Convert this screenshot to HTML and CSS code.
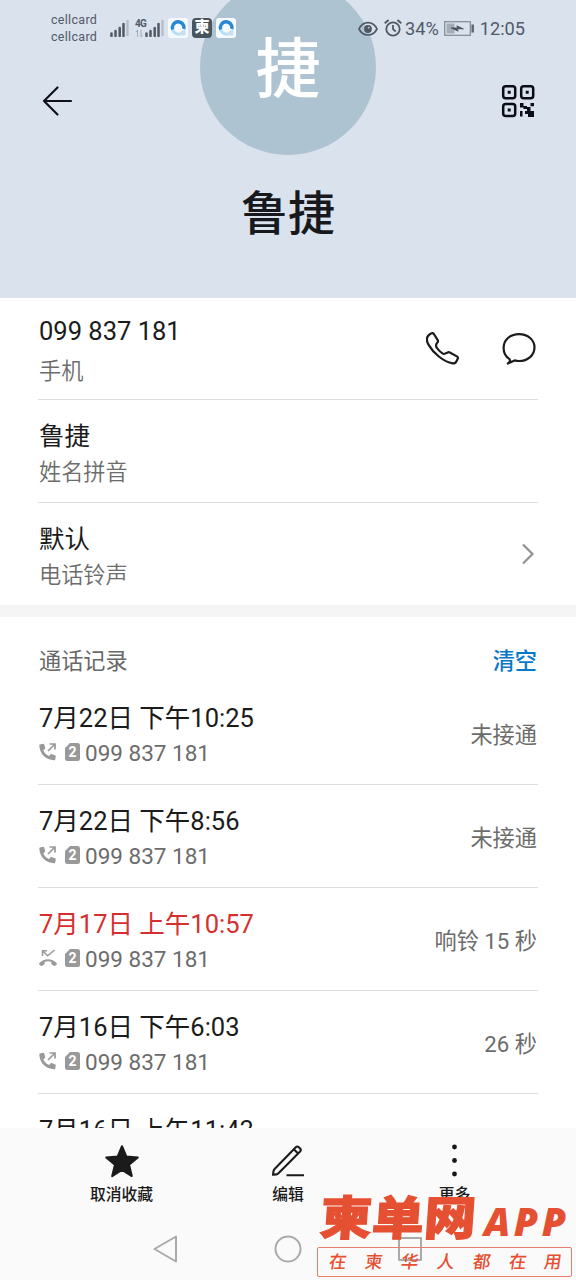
FILE: index.html
```html
<!DOCTYPE html>
<html lang="zh-CN">
<head>
<meta charset="utf-8">
<title>鲁捷</title>
<link rel="stylesheet" href="styles.css">
</head>
<body>
<svg width="0" height="0" class="defs">
  <symbol id="sim" viewBox="0 0 15 18"><path d="M5 0h7.500a2.500 2.500 0 0 1 2.500 2.500v13a2.500 2.500 0 0 1-2.500 2.500h-10a2.500 2.500 0 0 1-2.500-2.500V5z" fill="#999"/></symbol>
  <symbol id="handset" viewBox="0 0 18 18"><path d="M1 1.500 4.200.8c.6 0 .9.300 1.100.9l.9 3.200c.1.500 0 .8-.4 1.100L4.300 7.200c1.200 2.700 3 4.600 5.800 5.900l1.400-1.700c.3-.4.700-.5 1.200-.3l3.500 1.300c.5.200.7.500.6 1l-.6 3c-.1.600-.4.800-1 .8C6.800 17 .8 11.300.3 2.500c0-.6.200-.9.700-1z" fill="#999"/><path d="M9 8l7-7M10.500 1H16v5.500" fill="none" stroke="#999" stroke-width="1.700"/></symbol>
  <symbol id="missed" viewBox="0 0 18 18"><path d="M.2 14.300c4.900-5.300 12.700-5.300 17.600 0 .3.400.3.700 0 1l-1.600 1.500c-.3.300-.7.300-1 .1l-2.500-1.600c-.3-.2-.4-.5-.4-.9v-1.700c-2.200-.7-4.400-.7-6.600 0v1.700c0 .4-.1.700-.4.900l-2.500 1.600c-.3.200-.7.200-1-.1L.2 15.300c-.3-.3-.3-.6 0-1z" fill="#999"/><path d="M3.500 7V1.800H8M4 2.300l4.700 4.400L15.500 1" fill="none" stroke="#999" stroke-width="1.500"/></symbol>
  <symbol id="bars" viewBox="0 0 19 18"><path d="M1.500 17v-2.500M5.500 17v-5M9.700 17V9M13.500 17V5" stroke="#515a67" stroke-width="2.500" stroke-linecap="round"/></symbol>
  <symbol id="browser" viewBox="0 0 20 20"><rect width="20" height="20" rx="3" fill="#f5faff"/><path d="M4.500 9.500a6 6 0 0 0 7 6.500" fill="none" stroke="#b5ddf7" stroke-width="3"/><path d="M4.700 11.500A5.800 5.800 0 1 1 15.800 11" fill="none" stroke="#2787d4" stroke-width="3.400"/><path d="M11 17.500c.2-3.500 2.500-5.500 6.500-5.500v5.500z" fill="#c9dfef"/></symbol>
</svg>
<main class="screen">
  <header class="hero">
    <div class="avatar">捷</div>
    <div class="status">
      <div class="carriers"><span>cellcard</span><span>cellcard</span></div>
      <div class="signals">
        <svg class="bars" viewBox="0 0 19 18"><use href="#bars"/><path d="M17.500 17V1" stroke="#b4bcc8" stroke-width="2.300"/></svg>
        <div class="net"><b>4G</b><svg width="9" height="9" viewBox="0 0 9 9"><path d="M2.500 8V1L1 3M6 1v7l1.500-2" fill="none" stroke="#a4adb9"/></svg></div>
        <svg class="bars second" viewBox="0 0 19 18"><use href="#bars"/><path d="M17.500 17V1" stroke="#b4bcc8" stroke-width="2.300"/></svg>
      </div>
      <div class="apps">
        <svg width="20" height="20"><use href="#browser"/></svg>
        <span class="app">柬</span>
        <svg width="20" height="20"><use href="#browser"/></svg>
      </div>
      <div class="system">
        <svg width="20" height="16" viewBox="0 0 20 16" fill="none" stroke="#4e5965" stroke-width="1.700"><path d="M1 8C5-.5 15-.5 19 8 15 16 5 16 1 8z"/><circle cx="10" cy="8" r="3.900" fill="#4e5965" stroke="none"/><path d="M10 7.400 11.500 5.900" stroke="#c4d1dc" stroke-width="1.200"/></svg>
        <svg class="alarm" width="18" height="18" viewBox="0 0 18 18" fill="none" stroke="#4e5965" stroke-width="1.800"><circle cx="9" cy="10" r="6.700"/><path d="M9 6v4.200l2.700 2.300M.7 4.300 4.600 1M17.300 4.300 13.400 1"/></svg>
        <span class="percent">34%</span>
        <svg class="battery" width="31" height="15" viewBox="0 0 31 15"><rect x=".7" y=".7" width="25.600" height="13.600" fill="none" stroke="#808995" stroke-width="1.200"/><path d="M2.500 2.500h8v10h-8z" fill="#a4adb8"/><path d="M7 6.800 13.500 7 12.800 4.800l6.700 3.100-6-.1.600 2.400z" fill="#46505b" stroke="#46505b" stroke-width=".7"/><path d="M28.700 3.500v8" stroke="#5d6671" stroke-width="2.500"/></svg>
        <span class="clock">12:05</span>
      </div>
    </div>
    <div class="toolbar">
      <svg width="32" height="32" viewBox="0 0 32 32" fill="none" stroke="#10121b" stroke-width="2.200" stroke-linecap="round" stroke-linejoin="round"><path d="M30 16H3M16.500 2.500 3 16l13.500 13.500"/></svg>
      <svg width="34" height="34" viewBox="0 0 34 34" fill="#0b0d16"><g fill="none" stroke="#0b0d16" stroke-width="2.500"><rect x="2.200" y="2.200" width="12" height="12" rx="2.500"/><rect x="20.200" y="2.200" width="12" height="12" rx="2.500"/><rect x="2.200" y="20" width="12" height="12" rx="2.500"/></g><path d="M6.700 6.700h3v3h-3zM24.700 6.700h3v3h-3zM6.700 24.500h3v3h-3zM19 19h3.500v3H26v3h-3.500v-1.500H19zM29.500 19H33v3.200h-3.500zM19 27h2.500v5.500H19zM26 23h3.500v4H33v6h-6v-3h-3v-3h2z"/></svg>
    </div>
    <h1>鲁捷</h1>
  </header>
  <section class="details">
    <div class="row phone">
      <div class="copy"><p class="title">099 837 181</p><p class="sub">手机</p></div>
      <div class="actions">
        <svg width="34" height="34" viewBox="0 0 34 34" fill="none" stroke="#1c1c1c" stroke-width="2.200" stroke-linejoin="round"><path d="M3.500 2.500 5.300 1.400c1-.6 1.900-.3 2.600.6l3.800 6.100c.5.900.4 1.700-.3 2.500-1.700 1.800-1.800 3.300-.6 5.200 1.200 2 3.200 4 5.600 5.600 1 .6 1.800.5 2.900.1l2.500-1.100c.8-.3 1.300-.3 2 .1l7.100 3.900c1.100.6 1.300 1.500.7 2.600l-1.100 2.200c-.7 1.500-1.800 2.200-3.700 2.200-9.800-1.800-19.500-10.500-24-18.300C.5 9.200-.2 5 3.500 2.500z"/></svg>
        <svg width="34" height="34" viewBox="0 0 34 34" fill="none" stroke="#1c1c1c" stroke-width="2.200" stroke-linejoin="round"><path d="M7.600 27.200C3.600 24.600 1.600 20.700 1.600 16 1.600 8 8 2.100 17 2.100S32.500 8 32.500 15.500 26 29 17 29c-1.700 0-3-.2-4.400-.6L5.800 31.600 8.200 29.400z"/></svg>
      </div>
    </div>
    <div class="row"><div class="copy"><p class="title">鲁捷</p><p class="sub">姓名拼音</p></div></div>
    <div class="row"><div class="copy"><p class="title">默认</p><p class="sub">电话铃声</p></div>
      <svg class="chevron" width="14" height="22" viewBox="0 0 14 22" fill="none" stroke="#929292" stroke-width="2.200"><path d="m2 1.500 9.500 9.500L2 20.500"/></svg></div>
  </section>
  <div class="divider"></div>
  <section class="history">
    <div class="heading"><h2>通话记录</h2><span class="clear">清空</span></div>
    <div class="row"><div class="copy"><p class="title">7月22日 下午10:25</p><p class="sub number"><svg width="18" height="18"><use href="#handset"/></svg><span class="sim"><svg width="15" height="18"><use href="#sim"/></svg><b>2</b></span>099 837 181</p></div><span class="result">未接通</span></div>
    <div class="row"><div class="copy"><p class="title">7月22日 下午8:56</p><p class="sub number"><svg width="18" height="18"><use href="#handset"/></svg><span class="sim"><svg width="15" height="18"><use href="#sim"/></svg><b>2</b></span>099 837 181</p></div><span class="result">未接通</span></div>
    <div class="row"><div class="copy"><p class="title red">7月17日 上午10:57</p><p class="sub number"><svg width="18" height="18"><use href="#missed"/></svg><span class="sim"><svg width="15" height="18"><use href="#sim"/></svg><b>2</b></span>099 837 181</p></div><span class="result">响铃 15 秒</span></div>
    <div class="row"><div class="copy"><p class="title">7月16日 下午6:03</p><p class="sub number"><svg width="18" height="18"><use href="#handset"/></svg><span class="sim"><svg width="15" height="18"><use href="#sim"/></svg><b>2</b></span>099 837 181</p></div><span class="result">26 秒</span></div>
    <div class="row"><div class="copy"><p class="title">7月16日 上午11:43</p></div></div>
  </section>
  <footer>
    <div class="tabs">
      <div class="tab"><svg width="36" height="34" viewBox="0 0 36 34"><path d="m18 2.200 4.300 10.300 11.500.9-8.700 7.400 2.700 11.300L18 26l-9.800 6.100 2.700-11.300-8.700-7.400 11.500-.9z" fill="#1b1b1b" stroke="#1b1b1b" stroke-width="2" stroke-linejoin="round"/></svg><span>取消收藏</span></div>
      <div class="tab"><svg width="34" height="34" viewBox="0 0 34 34" fill="none" stroke="#1b1b1b" stroke-width="2.100" stroke-linejoin="round"><path d="M2 30.800l.5-3.600c.2-.9.500-1.500 1.100-2.100L24.800 3.200c1-.9 2.100-.9 3 0l1.300 1.300c.9.900.9 2 0 3L7.500 29.300c-.6.600-1.200.9-2 1.100zM22.800 5.300l4.300 4.300M15.500 31.300H33"/></svg><span>编辑</span></div>
      <div class="tab"><svg width="34" height="34" viewBox="0 0 34 34" fill="#161616"><circle cx="16.500" cy="3" r="2.400"/><circle cx="16.500" cy="16.500" r="2.400"/><circle cx="16.500" cy="30" r="2.400"/></svg><span>更多</span></div>
    </div>
    <div class="nav">
      <svg width="28" height="28" viewBox="0 0 28 28"><path d="M24 1.500v25L2.500 14z"/></svg>
      <svg width="28" height="28" viewBox="0 0 28 28"><circle cx="14" cy="14" r="12.500"/></svg>
      <svg width="28" height="28" viewBox="0 0 28 28"><path d="M3 3h22v22H3z"/></svg>
    </div>
  </footer>
  <aside class="watermark">
    <div class="brand"><span class="brand-cn">柬单网</span><span class="brand-app">APP</span></div>
    <div class="slogan"><i>在</i><i>柬</i><i>华</i><i>人</i><i>都</i><i>在</i><i>用</i></div>
  </aside>
</main>
</body>
</html>
```
FILE: styles.css
```css
* { box-sizing: border-box; margin: 0; padding: 0; }
body { background: #fff; font-family: Roboto, "Noto Sans CJK SC", sans-serif; color: #1b1b1b; }
svg { display: block; flex: none; }
.defs { position: absolute; }
.screen { position: relative; width: 576px; height: 1280px; overflow: hidden; display: flex; flex-direction: column; }

.hero { position: relative; height: 298px; flex: none; background: #dae2ee; overflow: hidden; }
.avatar { position: absolute; left: 200px; top: -21px; width: 176px; height: 176px; border-radius: 50%; background: #adc3d1; color: #fff; font-size: 65px; font-weight: 500; line-height: 182px; text-align: center; }
.status { position: relative; height: 56px; display: flex; align-items: center; padding: 0 51px; color: #515a67; }
.carriers { display: flex; flex-direction: column; font-size: 12.500px; line-height: 17.500px; width: 59px; letter-spacing: .3px; }
.signals { display: flex; align-items: center; width: 58px; }
.bars { width: 19px; height: 18px; }
.net { width: 9px; margin-left: 6px; height: 20px; font-size: 10px; line-height: 11px; }
.net b { letter-spacing: -.8px; }
.second { margin-left: 1px; }
.apps { display: flex; gap: 4px; margin-top: -1px; }
.app { width: 20px; height: 20px; border-radius: 4px; background: #47545e; color: #fff; font-size: 15px; font-weight: 900; line-height: 19px; text-align: center; }
.system { display: flex; align-items: center; margin-left: auto; font-size: 18.200px; padding-top: 1px; }
.alarm { margin: -1px 0 0 6px; }
.percent { margin-left: 3px; }
.battery { margin-left: 5px; }
.clock { margin-left: 5px; }
.toolbar { position: relative; height: 90px; display: flex; justify-content: space-between; align-items: center; padding: 0 41px; }
h1 { position: relative; font-size: 47px; font-weight: 500; line-height: 64px; margin-top: 36px; text-align: center; color: #17191d; }

.row { height: 103px; margin: 0 38px; padding: 18px 1px 0; border-bottom: 1px solid #dedede; display: flex; justify-content: space-between; }
.phone { height: 102px; padding-top: 15px; }
.phone .sub { margin-top: 4px; }
.title { font-size: 25.500px; line-height: 36px; white-space: nowrap; }
.sub { font-size: 22.200px; line-height: 36px; color: #6c6c6c; font-family: Roboto, "Noto Sans CJK SC DemiLight", "Noto Sans CJK SC", sans-serif; }
.actions { display: flex; gap: 42px; padding: 19px 1px 0 0; }
.chevron { margin: 22px 2px 0 0; }
.details .row:last-child { border: 0; height: 102px; }
.divider { height: 12px; background: #f5f5f5; flex: none; }
.history { height: 511px; overflow: hidden; flex: none; }
.heading { height: 65px; margin: 0 39px; display: flex; justify-content: space-between; padding-top: 27px; line-height: 34px; }
h2, .clear { font-size: 22.200px; font-weight: 400; color: #686868; }
.clear { color: #0878c9; font-weight: 500; }
.number { display: flex; align-items: center; font-size: 22.500px; line-height: 34px; }
.sim { position: relative; margin: 0 5px 0 8px; width: 15px; height: 18px; }
.number > svg, .sim { transform: translateY(-1px); }
.sim b { position: absolute; inset: 0; color: #fff; font-size: 14px; line-height: 19px; text-align: center; }
.result { font-size: 22.200px; line-height: 34px; color: #6c6c6c; padding-top: 18px; }
.red { color: #d5302f; }

footer { height: 152px; background: #fafafa; flex: none; }
.tabs { display: flex; justify-content: center; height: 92px; padding-top: 16px; }
.tab { width: 166.500px; display: flex; flex-direction: column; align-items: center; font-size: 15.800px; line-height: 24px; }
.tab span { margin-top: 5px; font-weight: 500; }
.nav { display: flex; justify-content: center; gap: 94px; padding-top: 15px; }
.nav svg { fill: none; stroke: #aaa; stroke-width: 2; stroke-linejoin: round; }

.watermark { position: absolute; left: 317px; top: 1190px; width: 255px; color: #e65032; }
.brand { display: flex; height: 57px; align-items: center; white-space: nowrap; }
.brand-cn { font-size: 52px; font-weight: 900; line-height: 57px; width: 163px; padding-left: 3px; transform: translateY(1px) skewX(-4deg) scaleY(.9); -webkit-text-stroke: 1.200px #e65032; }
.brand-app { font: italic 800 39px/57px "Open Sans", sans-serif; letter-spacing: 3.500px; padding: 4px 0 0 4px; }
.slogan { height: 30px; border: 1.500px solid #ea8069; border-radius: 2px; display: flex; justify-content: space-between; padding: 0 9px 0 11px; font-size: 17.500px; line-height: 29px; font-weight: 500; }
.slogan i { transform: skewX(-8deg); font-style: normal; }
```
